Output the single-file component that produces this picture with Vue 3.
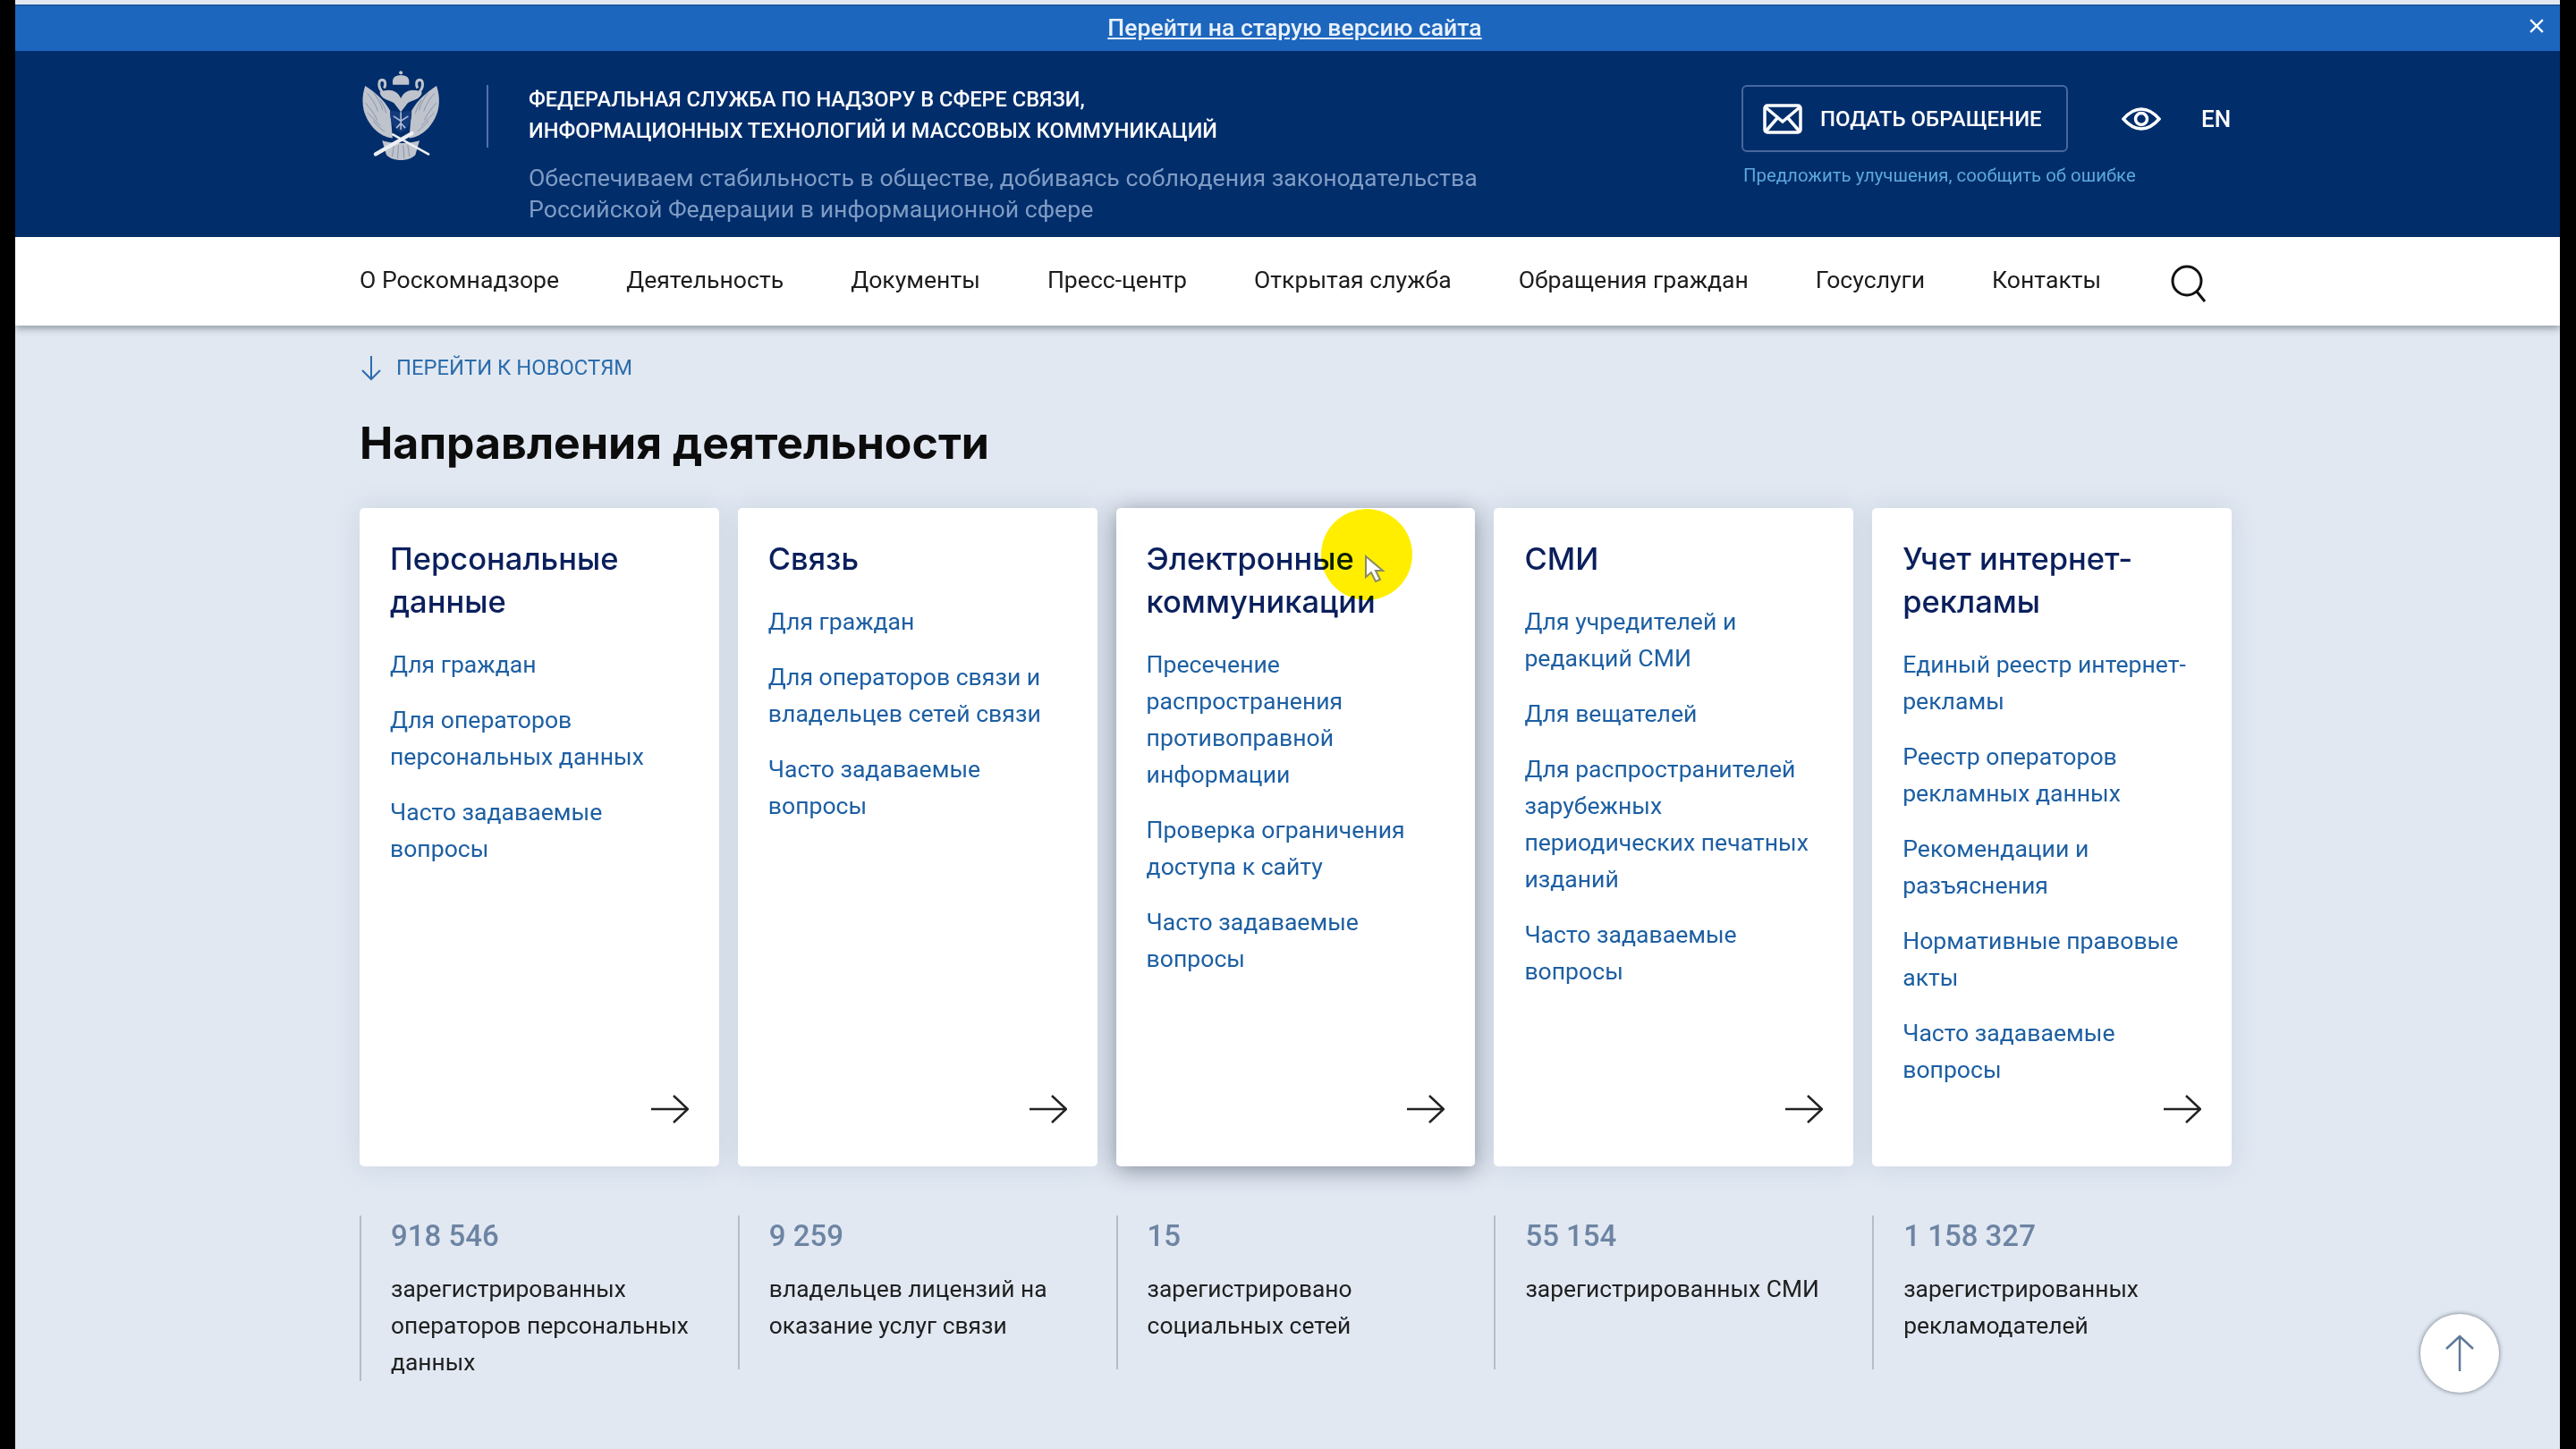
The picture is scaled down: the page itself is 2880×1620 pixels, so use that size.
<template>
<div class="page">
    <div class="banner">
        <a class="banner-link">Перейти на старую версию сайта</a>
        <svg class="banner-close" viewBox="0 0 14 14"><path d="M1 1l12 12M13 1L1 13" /></svg>
    </div>

    <header class="header">
        <svg class="emblem" viewBox="195 55 265 305">
            <g fill="#bfc3cc">
                <circle cx="325" cy="64" r="6" />
                <path d="M298 104c-4-22 6-32 27-32s31 10 27 32z" />
                <path d="M205 108c30 20 62 44 84 84l8 92c-44-4-82-42-97-94-7-30-3-60 5-82z" />
                <path d="M445 108c-30 20-62 44-84 84l-8 92c44-4 82-42 97-94 7-30 3-60-5-82z" />
                <path d="M254 130c30-14 58-8 71 20 13-28 41-34 71-20-4 24-32 26-48 36l-23 30-23-30c-16-10-44-12-48-36z" />
                <path d="M262 292c30 12 96 12 126 0l-14 48c-20 24-78 24-98 0z" />
            </g>
            <g fill="none" stroke="#bfc3cc" stroke-width="9">
                <path d="M264 130c-18-18-14-42-2-42 13 1 12 18 7 28" />
                <path d="M386 130c18-18 14-42 2-42-13 1-12 18-7 28" />
            </g>
            <g fill="none" stroke="#7f8ba6" stroke-width="2.5">
                <path d="M212 134c14 14 28 36 36 60M206 166c14 16 30 36 40 58M212 198c14 14 30 30 44 44M234 132c12 16 24 36 30 58M256 156c8 12 16 28 20 44M232 226c12 14 24 26 38 36" />
                <path d="M438 134c-14 14-28 36-36 60M444 166c-14 16-30 36-40 58M438 198c-14 14-30 30-44 44M416 132c-12 16-24 36-30 58M394 156c-8 12-16 28-20 44M418 226c-12 14-24 26-38 36" />
                <path d="M296 346l6-40M314 352l3-44M336 352l-3-44M354 346l-6-40" />
            </g>
            <path d="M289 192c18 2 26 2 36 8 10-6 18-6 36-8 2 32-8 58-36 74-28-16-38-42-36-74z" fill="#133b7c" />
            <path d="M325 196v60M300 210l25 16 25-16M310 250l15-16 15 16" fill="none" stroke="#aebbd4" stroke-width="5" />
            <path d="M240 338l122-70" stroke="#eceef2" stroke-width="13" stroke-linecap="round" />
            <path d="M418 338l-120-66" stroke="#eceef2" stroke-width="8" stroke-linecap="round" />
        </svg>
        <div class="divider"></div>
        <div class="service">
            <div class="service-name">ФЕДЕРАЛЬНАЯ СЛУЖБА ПО НАДЗОРУ В СФЕРЕ СВЯЗИ,<br>ИНФОРМАЦИОННЫХ ТЕХНОЛОГИЙ И МАССОВЫХ КОММУНИКАЦИЙ</div>
            <div class="service-motto">Обеспечиваем стабильность в обществе, добиваясь соблюдения законодательства<br>Российской Федерации в информационной сфере</div>
        </div>
        <div class="actions">
            <div class="actions-row">
                <a class="appeal">
                    <svg class="appeal-icon" viewBox="0 0 44 34"><rect x="2" y="2" width="40" height="30" rx="3" /><path d="M3 4l19 16L41 4M3 31l13-15M41 31L28 16" /></svg>
                    ПОДАТЬ ОБРАЩЕНИЕ
                </a>
                <svg class="eye" viewBox="0 0 44 26"><path d="M2 13C9 5 15 2 22 2s13 3 20 11c-7 8-13 11-20 11S9 21 2 13z" /><circle cx="22" cy="13" r="6.5" /></svg>
                <span class="lang">EN</span>
            </div>
            <a class="suggest">Предложить улучшения, сообщить об ошибке</a>
        </div>
    </header>

    <nav class="nav">
        <a v-for="item in menu" :key="item" class="nav-item">{{ item }}</a>
        <svg class="search" viewBox="0 0 40 42"><circle cx="18" cy="18" r="16" /><path d="M29 30l9 11" /></svg>
    </nav>

    <main class="content">
        <a class="to-news">
            <svg viewBox="0 0 24 30"><path d="M12 2v26M2 18l10 10 10-10" /></svg>
            ПЕРЕЙТИ К НОВОСТЯМ
        </a>
        <h1 class="title">Направления деятельности</h1>

        <div class="cards">
            <div v-for="card in cards" :key="card.title" class="card" :class="{ 'card-hover': card.hover }">
                <div class="card-title">{{ card.title }}</div>
                <a v-for="link in card.links" :key="link" class="card-link">{{ link }}</a>
                <svg class="card-arrow" viewBox="0 0 42 32"><path d="M0 16h41M25 1l16 15-16 15" /></svg>
            </div>
        </div>

        <div class="stats">
            <div v-for="stat in stats" :key="stat.value" class="stat">
                <div class="stat-value">{{ stat.value }}</div>
                <div class="stat-text">{{ stat.text }}</div>
            </div>
        </div>
    </main>

    <div class="highlight"></div>
    <svg class="cursor" viewBox="0 0 24 32"><path d="M2 2v23l6-5 5 10 5-2-5-10h8z" /></svg>

    <button class="to-top">
        <svg viewBox="0 0 32 42"><path d="M16 41V2M1 16L16 2l15 14" /></svg>
    </button>
</div>
</template>

<script setup>
const menu = ['О Роскомнадзоре', 'Деятельность', 'Документы', 'Пресс-центр', 'Открытая служба', 'Обращения граждан', 'Госуслуги', 'Контакты']

const cards = [
    { title: 'Персональные данные', links: ['Для граждан', 'Для операторов персональных данных', 'Часто задаваемые вопросы'] },
    { title: 'Связь', links: ['Для граждан', 'Для операторов связи и владельцев сетей связи', 'Часто задаваемые вопросы'] },
    { title: 'Электронные коммуникации', hover: true, links: ['Пресечение распространения противоправной информации', 'Проверка ограничения доступа к сайту', 'Часто задаваемые вопросы'] },
    { title: 'СМИ', links: ['Для учредителей и редакций СМИ', 'Для вещателей', 'Для распространителей зарубежных периодических печатных изданий', 'Часто задаваемые вопросы'] },
    { title: 'Учет интернет-рекламы', links: ['Единый реестр интернет-рекламы', 'Реестр операторов рекламных данных', 'Рекомендации и разъяснения', 'Нормативные правовые акты', 'Часто задаваемые вопросы'] },
]

const stats = [
    { value: '918 546', text: 'зарегистрированных операторов персональных данных' },
    { value: '9 259', text: 'владельцев лицензий на оказание услуг связи' },
    { value: '15', text: 'зарегистрировано социальных сетей' },
    { value: '55 154', text: 'зарегистрированных СМИ' },
    { value: '1 158 327', text: 'зарегистрированных рекламодателей' },
]
</script>

<style>
html, body {
    background: #000;
}
</style>

<style scoped>
.page {
    position: relative;
    width: 2845px;
    height: 1620px;
    margin-left: 17px;
    overflow: hidden;
    padding-top: 5px;
    box-sizing: border-box;
    background: #e1e8f2;
    font-family: Roboto, "Liberation Sans", sans-serif;
}

.banner {
    position: relative;
    height: 52px;
    display: flex;
    align-items: center;
    justify-content: center;
    padding: 0 0 3px 16px;
    background: #1d66bd;
    border-top: 2px solid #1a5aa5;
    box-sizing: border-box;
}

.banner-link {
    color: #e8f1fb;
    font-size: 26.6px;
    font-weight: 500;
    text-decoration: underline;
}

.banner-close {
    position: absolute;
    right: 18px;
    top: 14px;
    width: 16px;
    height: 16px;
    fill: none;
    stroke: #fff;
    stroke-width: 2;
}

.header {
    height: 208px;
    display: flex;
    padding-left: 385px;
    box-sizing: border-box;
    background: #012d6b;
}

.emblem {
    width: 88px;
    height: 102px;
    margin-top: 21px;
    margin-left: 3px;
}

.divider {
    width: 2px;
    height: 70px;
    margin: 38px 45px 0 51px;
    background: #4f73ab;
}

.service {
    width: 1356px;
    padding-top: 37px;
}

.service-name {
    color: #fff;
    font-size: 23.6px;
    font-weight: 500;
    line-height: 35px;
}

.service-motto {
    margin-top: 18px;
    color: #7f9cc4;
    font-size: 26.7px;
    line-height: 35px;
}

.actions {
    padding-top: 38px;
}

.actions-row {
    display: flex;
    align-items: center;
}

.appeal {
    width: 365px;
    height: 75px;
    display: flex;
    align-items: center;
    gap: 20px;
    padding-left: 22px;
    box-sizing: border-box;
    border: 2px solid #47689c;
    border-radius: 6px;
    color: #fff;
    font-size: 24px;
    font-weight: 500;
}

.appeal-icon {
    width: 44px;
    height: 34px;
    fill: none;
    stroke: #fff;
    stroke-width: 3.5;
}

.eye {
    width: 44px;
    height: 26px;
    margin-left: 60px;
    fill: none;
    stroke: #fff;
    stroke-width: 3.5;
}

.lang {
    margin-left: 45px;
    padding-top: 1px;
    color: #fff;
    font-size: 26px;
    font-weight: 500;
}

.suggest {
    display: block;
    margin-top: 11px;
    margin-left: 2px;
    color: #5ca8dc;
    font-size: 20.4px;
    line-height: 30px;
}

.nav {
    height: 99px;
    display: flex;
    align-items: center;
    gap: 75px;
    padding-left: 385px;
    box-sizing: border-box;
    background: #fff;
    box-shadow: 0 3px 8px rgba(40, 50, 60, .45);
    position: relative;
}

.nav-item {
    color: #1c1c1c;
    font-size: 26.6px;
    margin-top: -4px;
}

.search {
    width: 40px;
    height: 42px;
    margin: 4px 0 0 3px;
    fill: none;
    stroke: #111;
    stroke-width: 3;
}

.content {
    padding-left: 385px;
    width: 2478px;
    box-sizing: border-box;
}

.to-news {
    display: flex;
    align-items: center;
    gap: 16px;
    padding-top: 32px;
    padding-left: 1px;
    color: #2b6cab;
    font-size: 23.8px;
    line-height: 30px;
}

.to-news svg {
    width: 24px;
    height: 30px;
    fill: none;
    stroke: #2b6cab;
    stroke-width: 2;
}

.title {
    margin: 36px 0 0;
    color: #0c0c0c;
    font-family: Inter, Roboto, sans-serif;
    font-size: 50px;
    font-weight: 700;
    line-height: 66px;
}

.cards {
    display: grid;
    grid-template-columns: repeat(5, 1fr);
    grid-template-rows: 736px;
    gap: 21px;
    margin-top: 40px;
}

.card {
    position: relative;
    z-index: 1;
    display: flex;
    flex-direction: column;
    padding: 33px 34px 0;
    background: #fff;
    border-radius: 5px;
    box-shadow: 0 0 30px rgba(70, 90, 120, .14);
}

/* neighbours stay above this shadow, it only shows in the gaps */
.card-hover {
    z-index: 0;
    box-shadow: 0 4px 26px rgba(30, 40, 60, .48);
}

.card-title {
    margin-bottom: 25px;
    color: #0a1f5c;
    font-family: Inter, Roboto, sans-serif;
    font-size: 34.5px;
    font-weight: 500;
    line-height: 48px;
}

.card-link {
    margin-bottom: 21px;
    color: #1d5fa3;
    font-size: 26.6px;
    line-height: 41px;
}

.card-arrow {
    position: absolute;
    right: 34px;
    bottom: 48px;
    width: 42px;
    height: 32px;
    fill: none;
    stroke: #222;
    stroke-width: 2.5;
}

.stats {
    display: grid;
    grid-template-columns: repeat(5, 1fr);
    gap: 21px;
    margin-top: 55px;
    align-items: start;
}

.stat {
    min-height: 172px;
    padding: 1px 0 0 33px;
    border-left: 2px solid #b4bdc9;
    box-sizing: border-box;
}

.stat-value {
    color: #6d84a3;
    font-size: 33px;
    font-weight: 500;
    line-height: 44px;
}

.stat-text {
    margin-top: 17px;
    color: #202020;
    font-size: 26.4px;
    line-height: 41px;
}

.highlight {
    position: absolute;
    z-index: 2;
    left: 1460px;
    top: 569px;
    width: 102px;
    height: 102px;
    border-radius: 50%;
    background: #ffee00;
    mix-blend-mode: multiply;
}

.cursor {
    position: absolute;
    z-index: 3;
    left: 1508px;
    top: 620px;
    width: 24px;
    height: 32px;
    fill: #fff;
    stroke: #8a8a6a;
    stroke-width: 2;
}

.to-top {
    position: absolute;
    left: 2689px;
    top: 1469px;
    width: 88px;
    height: 88px;
    padding: 0;
    display: flex;
    align-items: center;
    justify-content: center;
    background: #fff;
    border: none;
    border-radius: 50%;
    box-shadow: 0 0 5px rgba(50, 60, 70, .7);
}

.to-top svg {
    width: 32px;
    height: 42px;
    fill: none;
    stroke: #5f7a98;
    stroke-width: 2.5;
}
</style>
